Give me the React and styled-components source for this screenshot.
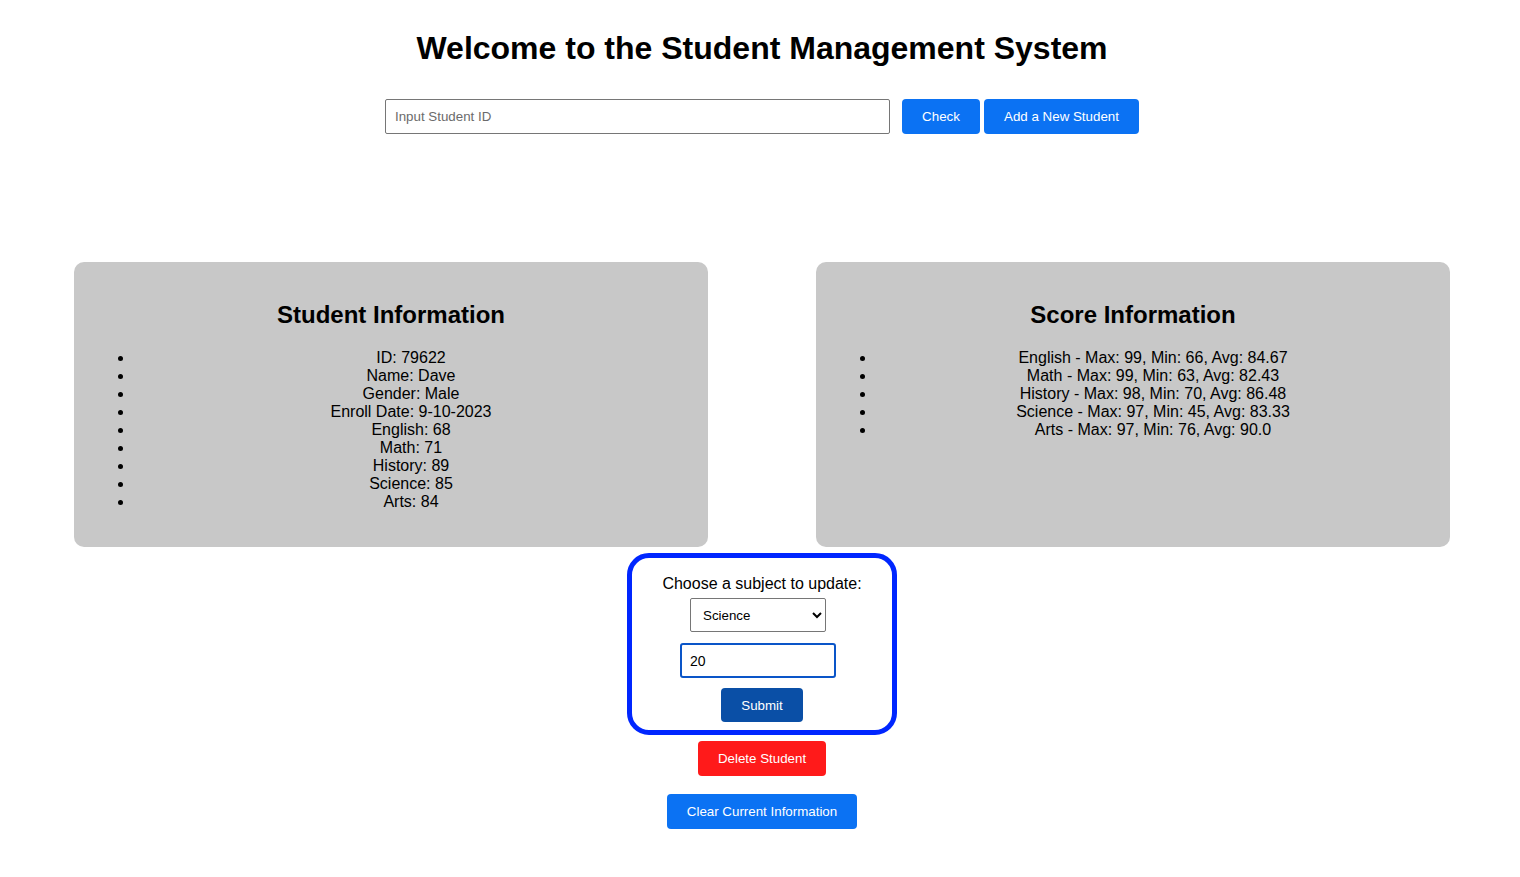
import React from 'react';
import styled, { createGlobalStyle } from 'styled-components';

const GlobalStyle = createGlobalStyle`
  body {
    margin: 0;
    background: #fff;
    font-family: "Liberation Sans", Arial, sans-serif;
    color: #000;
  }
`;

const Page = styled.div`
  text-align: center;
  padding: 9px 0 0 4px;
`;

const Title = styled.h1`
  font-size: 32px;
  font-weight: bold;
  margin: 21px 0 0;
  line-height: 37px;
`;

const SearchRow = styled.div`
  display: flex;
  justify-content: center;
  align-items: center;
  margin-top: 32px;
`;

const IdInput = styled.input`
  box-sizing: border-box;
  width: 505px;
  height: 35px;
  border: 1px solid #767676;
  border-radius: 2px;
  padding: 0 9px;
  font-family: "Liberation Sans", Arial, sans-serif;
  font-size: 13.33px;
  &::placeholder { color: #6b6b6b; }
`;

const Button = styled.button`
  box-sizing: border-box;
  height: 35px;
  width: ${p => p.$w}px;
  margin-left: ${p => p.$ml || 0}px;
  border: none;
  border-radius: 4px;
  background: ${p => p.$bg || '#0b72f3'};
  color: #fff;
  font-family: "Liberation Sans", Arial, sans-serif;
  font-size: 13.33px;
  cursor: pointer;
`;

const Panels = styled.div`
  display: flex;
  justify-content: space-between;
  padding: 0 70px;
  margin-top: 128px;
`;

const Panel = styled.section`
  box-sizing: border-box;
  width: 634px;
  height: 285px;
  background: #c8c8c8;
  border-radius: 10px;
  padding: 20px;
`;

const PanelTitle = styled.h2`
  font-size: 24px;
  font-weight: bold;
  margin: 19px 0 20px;
  line-height: 28px;
`;

const List = styled.ul`
  margin: 0;
  padding-left: 40px;
  font-size: 16px;
  line-height: 18px;
`;

const UpdateBox = styled.div`
  box-sizing: border-box;
  width: 270px;
  height: 182px;
  margin: 6px auto 0;
  border: 5px solid #0026ff;
  border-radius: 22px;
  padding-top: 17px;
  display: flex;
  flex-direction: column;
  align-items: center;
`;

const Label = styled.label`
  font-size: 16px;
  line-height: 18px;
`;

const Select = styled.select`
  box-sizing: border-box;
  margin: 5px 8px 0 0;
  width: 136px;
  height: 34px;
  border: 1px solid #767676;
  border-radius: 2px;
  padding-left: 8px;
  background: #fff;
  font-family: "Liberation Sans", Arial, sans-serif;
  font-size: 13.33px;
  color: #000;
`;

const ScoreInput = styled.input`
  box-sizing: border-box;
  margin: 11px 8px 0 0;
  width: 156px;
  height: 35px;
  border: 2px solid #0a55c8;
  border-radius: 3px;
  padding: 0 8px;
  font-family: "Liberation Sans", Arial, sans-serif;
  font-size: 14px;
  outline: none;
`;

const Stack = styled.div`
  display: flex;
  flex-direction: column;
  align-items: center;
  gap: ${p => p.$gap}px;
  margin-top: ${p => p.$mt}px;
`;

const students = ['ID: 79622', 'Name: Dave', 'Gender: Male', 'Enroll Date: 9-10-2023',
  'English: 68', 'Math: 71', 'History: 89', 'Science: 85', 'Arts: 84'];

const scores = [
  'English - Max: 99, Min: 66, Avg: 84.67',
  'Math - Max: 99, Min: 63, Avg: 82.43',
  'History - Max: 98, Min: 70, Avg: 86.48',
  'Science - Max: 97, Min: 45, Avg: 83.33',
  'Arts - Max: 97, Min: 76, Avg: 90.0',
];

const App = () => {
  return (
    <Page>
      <GlobalStyle />
      <Title>Welcome to the Student Management System</Title>
      <SearchRow>
        <IdInput placeholder="Input Student ID" />
        <Button $w={78} $ml={12}>Check</Button>
        <Button $w={155} $ml={4}>Add a New Student</Button>
      </SearchRow>

      <Panels>
        <Panel>
          <PanelTitle>Student Information</PanelTitle>
          <List>
            {students.map(s => <li key={s}>{s}</li>)}
          </List>
        </Panel>
        <Panel>
          <PanelTitle>Score Information</PanelTitle>
          <List>
            {scores.map(s => <li key={s}>{s}</li>)}
          </List>
        </Panel>
      </Panels>

      <UpdateBox>
        <Label>Choose a subject to update:</Label>
        <Select defaultValue="Science">
          <option>English</option>
          <option>Math</option>
          <option>History</option>
          <option>Science</option>
          <option>Arts</option>
        </Select>
        <ScoreInput defaultValue="20" />
        <Button $w={82} $bg="#0a4fa6" style={{ marginTop: 10, height: 34 }}>Submit</Button>
      </UpdateBox>

      <Stack $gap={18} $mt={6}>
        <Button $w={128} $bg="#ff1a1a">Delete Student</Button>
        <Button $w={190}>Clear Current Information</Button>
      </Stack>
    </Page>
  );
};

export default App;
